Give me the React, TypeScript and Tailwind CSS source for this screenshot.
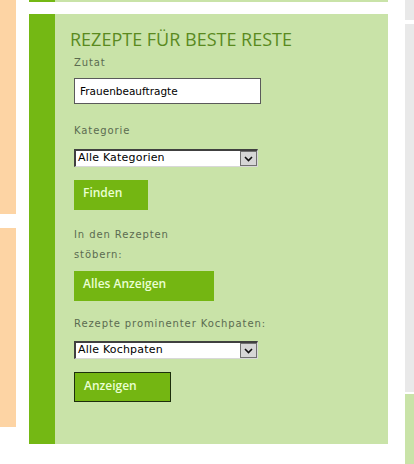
import React from "react";

function Chevron() {
  return (
    <svg width="9" height="6" viewBox="0 0 9 6" className="block">
      <path d="M1 1 L4.5 4.5 L8 1" fill="none" stroke="#111" strokeWidth="1.6" />
    </svg>
  );
}

function FakeSelect({ value }: { value: string }) {
  return (
    <div className="flex h-[18px] w-[184px] border-t-2 border-l-2 border-t-[#404040] border-l-[#404040] border-r border-b border-r-[#d8d8d8] border-b-[#d8d8d8] bg-white">
      <div className="flex flex-1 items-center pl-[2px] text-[11px] tracking-[0.2px] text-black">{value}</div>
      <div className="flex w-[17px] items-center justify-center border border-[#707070] bg-[#d6d6d6]">
        <Chevron />
      </div>
    </div>
  );
}

function Label({ children, className = "" }: { children: React.ReactNode; className?: string }) {
  return (
    <div className={`text-[10px] leading-[20px] tracking-[0.9px] text-[#5b6b50] ${className}`}>
      {children}
    </div>
  );
}

function GreenButton({ children, className = "" }: { children: React.ReactNode; className?: string }) {
  return (
    <button
      type="button"
      className={`flex h-[30px] items-start bg-[#74b612] pl-[9px] pt-[4px] text-left text-[12px] font-semibold text-[#eaffd2] ${className}`}
      style={{ fontFamily: '"Open Sans", sans-serif' }}
    >
      {children}
    </button>
  );
}

export default function App() {
  return (
    <div
      className="flex h-[464px] w-[414px] overflow-hidden bg-white"
      style={{ fontFamily: '"DejaVu Sans", Verdana, sans-serif' }}
    >
      {/* left column */}
      <div className="flex w-[16px] flex-col">
        <div className="h-[214px] bg-[#fdd4a4]" />
        <div className="mt-[14px] h-[199px] bg-[#fdd4a4]" />
      </div>

      {/* middle column */}
      <div className="ml-[13px] flex w-[359px] flex-col">
        <div className="flex h-[2px]">
          <div className="w-[26px] bg-[#74b814]" />
          <div className="flex-1 bg-[#c9e3a8]" />
        </div>
        <div className="mt-[12px] flex h-[430px]">
          <div className="w-[26px] bg-[#74b814]" />
          <div className="flex flex-1 flex-col bg-[#c9e3a8] pl-[19px] pt-[13px]">
            <h2
              className="-ml-[4px] text-[18px] leading-[24px] text-[#5a8a1f]"
              style={{ fontFamily: '"Open Sans", sans-serif' }}
            >
              REZEPTE FÜR BESTE RESTE
            </h2>
            <Label className="mt-[2px]">Zutat</Label>
            <input
              readOnly
              value="Frauenbeauftragte"
              className="mt-[5px] h-[26px] w-[187px] border border-[#5a5a5a] bg-white pl-[5px] text-[10.5px] text-black outline-none"
            />
            <Label className="mt-[17px]">Kategorie</Label>
            <div className="mt-[8px]">
              <FakeSelect value="Alle Kategorien" />
            </div>
            <GreenButton className="mt-[13px] w-[74px]">Finden</GreenButton>
            <Label className="mt-[15px] w-[100px]">In den Rezepten stöbern:</Label>
            <GreenButton className="mt-[6px] w-[140px]">Alles Anzeigen</GreenButton>
            <Label className="mt-[13px]">Rezepte prominenter Kochpaten:</Label>
            <div className="mt-[7px]">
              <FakeSelect value="Alle Kochpaten" />
            </div>
            <GreenButton className="mt-[13px] w-[97px] border border-[#1c2e0c] pl-[8px] pt-[3px]">Anzeigen</GreenButton>
          </div>
        </div>
      </div>

      {/* right column */}
      <div className="ml-[17px] flex w-[9px] flex-col">
        <div className="h-[20px] bg-[#e9e9e9]" />
        <div className="mt-[4px] h-[368px] bg-[#e9e9e9]" />
        <div className="mt-[2px] flex-1 bg-[#c9e3a8]" />
      </div>
    </div>
  );
}
